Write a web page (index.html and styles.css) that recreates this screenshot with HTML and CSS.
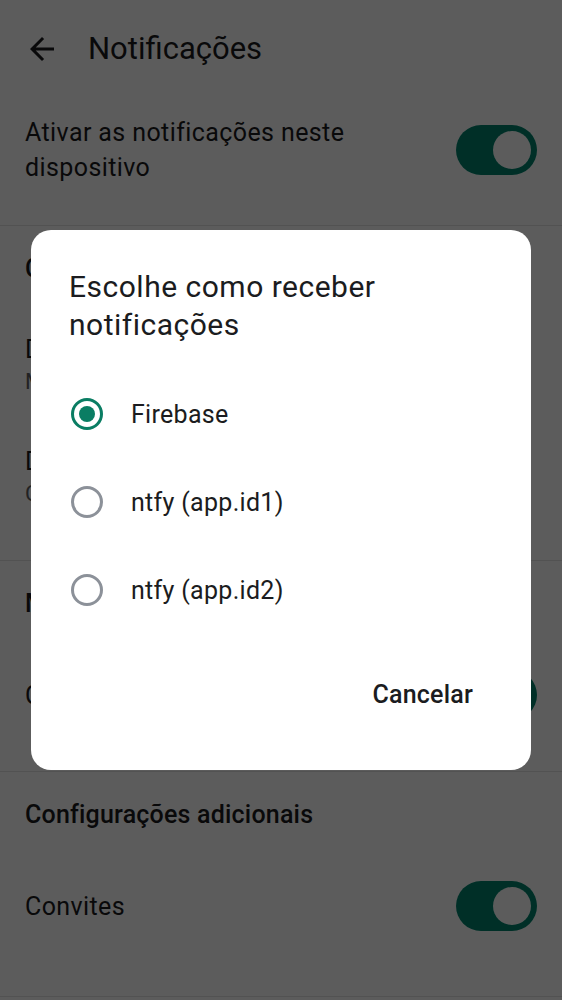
FILE: index.html
```html
<!DOCTYPE html>
<html lang="pt">
<head>
<meta charset="utf-8">
<link rel="stylesheet" href="styles.css">
</head>
<body>
<div class="page">
  <header class="topbar">
    <svg class="back" viewBox="0 0 24 24" width="36" height="36"><path d="M20 11H7.83l5.59-5.59L12 4l-8 8 8 8 1.41-1.41L7.83 13H20v-2z" fill="currentColor"/></svg>
    <h1 class="title">Notificações</h1>
  </header>
  <div class="row row-main">
    <div class="row-text">Ativar as notificações neste<br>dispositivo</div>
    <span class="switch"><span class="thumb"></span></span>
  </div>
  <section class="section">
    <div class="section-title">Co</div>
    <div class="item">
      <div class="item-title">Dist.</div>
      <div class="item-sub">Mét.</div>
    </div>
    <div class="item">
      <div class="item-title">Disp.</div>
      <div class="item-sub">Conf.</div>
    </div>
  </section>
  <section class="section">
    <div class="section-title">Msg.</div>
    <div class="row row-switch">
      <div class="row-text">Cham.</div>
      <span class="switch"><span class="thumb"></span></span>
    </div>
  </section>
  <section class="section section-last">
    <div class="section-title">Configurações adicionais</div>
    <div class="row row-switch">
      <div class="row-text">Convites</div>
      <span class="switch"><span class="thumb"></span></span>
    </div>
  </section>
</div>
<div class="scrim"></div>
<div class="dialog">
  <h2 class="dialog-title">Escolhe como receber<br>notificações</h2>
  <div class="options">
    <div class="option"><span class="radio checked"></span><span class="option-label">Firebase</span></div>
    <div class="option"><span class="radio"></span><span class="option-label">ntfy (app.id1)</span></div>
    <div class="option"><span class="radio"></span><span class="option-label">ntfy (app.id2)</span></div>
  </div>
  <div class="actions"><span class="btn">Cancelar</span></div>
</div>
</body>
</html>
```
FILE: styles.css
```css
* { box-sizing: border-box; }
html, body { margin: 0; padding: 0; }
body {
  width: 562px;
  height: 1000px;
  overflow: hidden;
  background: #ffffff;
  font-family: Roboto, "Liberation Sans", sans-serif;
  color: #1b1b1d;
}
.page { width: 562px; }
.topbar {
  height: 100px;
  display: flex;
  align-items: center;
  padding-left: 24px;
  gap: 28px;
}
.back { color: #1b1b1d; display: block; margin-top: -2px; }
.title {
  margin: 0;
  font-size: 31px;
  font-weight: 400;
  line-height: 36px;
  margin-top: -2px;
}
.row {
  display: flex;
  align-items: center;
  justify-content: space-between;
  padding: 0 25px;
}
.row-main { height: 100px; margin-bottom: 25px; }
.row-text { font-size: 25px; line-height: 35px; letter-spacing: 0.4px; }
.switch {
  width: 81px;
  height: 50px;
  border-radius: 25px;
  background: #00846e;
  display: flex;
  align-items: center;
  justify-content: flex-end;
  padding-right: 6px;
  flex: none;
}
.thumb {
  width: 38px;
  height: 38px;
  border-radius: 50%;
  background: #ffffff;
}
.section { border-top: 1px solid #e2e2e2; padding-bottom: 26px; }
.section-title {
  height: 84px;
  display: flex;
  align-items: center;
  padding: 0 25px;
  font-size: 25px;
  font-weight: 500;
  letter-spacing: 0.2px;
}
.item {
  height: 112px;
  padding: 0 25px;
  display: flex;
  flex-direction: column;
  justify-content: center;
}
.item-title { font-size: 25px; line-height: 32px; }
.item-sub { font-size: 22px; line-height: 32px; color: #5e5e62; }
.row-switch { height: 100px; }
.section-last { padding-bottom: 40px; border-bottom: 1px solid #e2e2e2; }
.scrim {
  position: fixed;
  inset: 0;
  background: rgba(0, 0, 0, 0.64);
}
.dialog {
  position: fixed;
  left: 31px;
  top: 230px;
  width: 500px;
  height: 540px;
  background: #ffffff;
  border-radius: 20px;
  padding: 38px 0 0;
  color: #1b1c20;
}
.dialog-title {
  margin: 0;
  padding: 0 38px;
  font-size: 30px;
  font-weight: 400;
  line-height: 38px;
  letter-spacing: 0.5px;
}
.options { margin-top: 26px; }
.option {
  height: 88px;
  display: flex;
  align-items: center;
  padding-left: 40px;
}
.radio {
  width: 32px;
  height: 32px;
  border-radius: 50%;
  border: 3px solid #8c9199;
  flex: none;
  display: flex;
  align-items: center;
  justify-content: center;
}
.radio.checked { border-color: #0a7d63; }
.radio.checked::after {
  content: "";
  width: 16px;
  height: 16px;
  border-radius: 50%;
  background: #0a7d63;
}
.option-label {
  margin-left: 28px;
  font-size: 25px;
  letter-spacing: 0.3px;
}
.actions {
  display: flex;
  justify-content: flex-end;
  padding: 37px 58px 0 0;
}
.btn {
  height: 48px;
  line-height: 48px;
  font-size: 25px;
  font-weight: 500;
  letter-spacing: 0.2px;
}
```
